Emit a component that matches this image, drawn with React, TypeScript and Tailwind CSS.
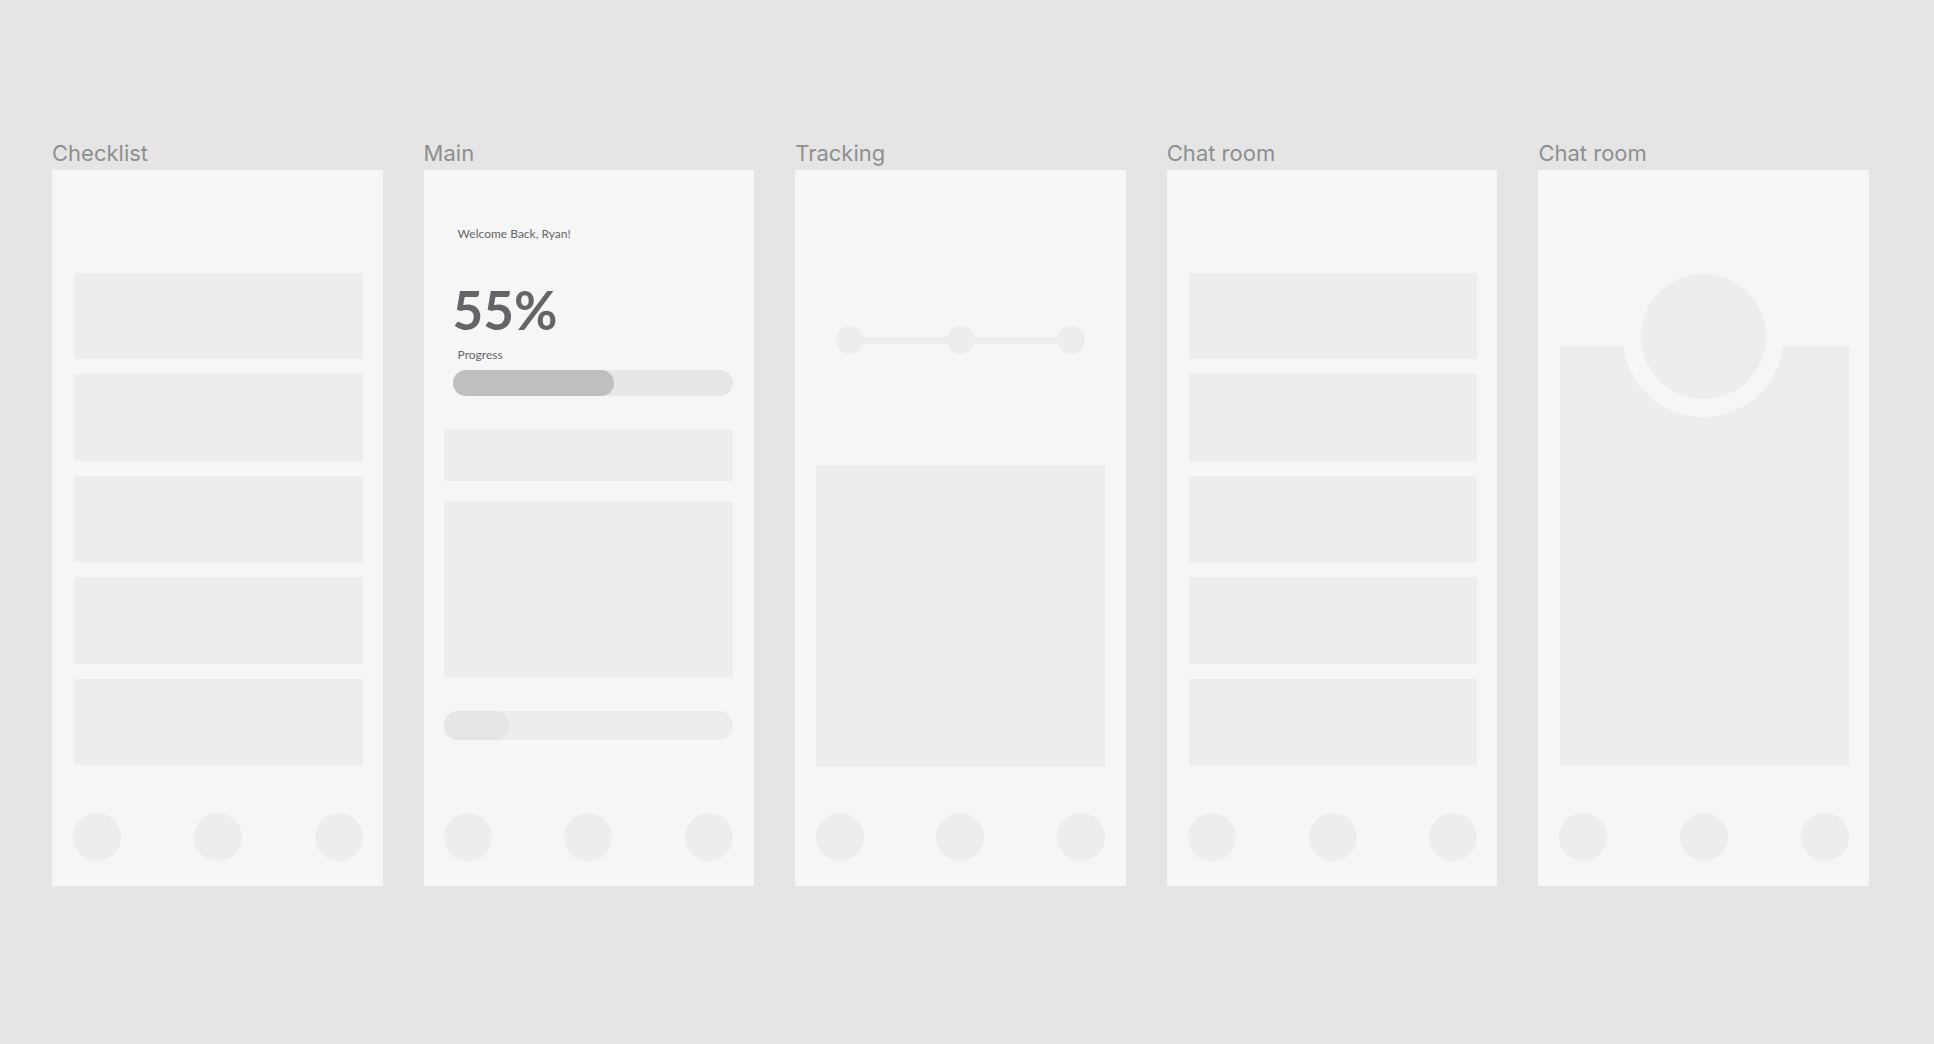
import type { ReactNode } from "react";

function Block({ className = "" }: { className?: string }) {
  return <div className={`bg-[#ededed] ${className}`} />;
}

function Nav({ className }: { className: string }) {
  return (
    <nav className={`mt-auto flex justify-between pb-[25px] ${className}`}>
      {["First tab", "Second tab", "Third tab"].map((label) => (
        <button key={label} type="button" aria-label={label} className="size-12 rounded-full bg-[#ededed]" />
      ))}
    </nav>
  );
}

function Screen({ title, navClass, children }: { title: string; navClass: string; children: ReactNode }) {
  return (
    <section className="flex min-w-0 flex-col">
      <h2 className="font-['Inter',sans-serif] text-[22px] leading-[34px] whitespace-nowrap text-[#8f8f8f]">{title}</h2>
      <div className="flex min-h-[716px] flex-1 flex-col bg-[#f6f6f6]">
        {children}
        <Nav className={navClass} />
      </div>
    </section>
  );
}

function CardList() {
  return (
    <div className="mt-[103px] grid h-[492px] auto-rows-fr gap-[15px] pr-5 pl-[22px]">
      {[1, 2, 3, 4, 5].map((n) => (
        <Block key={n} />
      ))}
    </div>
  );
}

function ProgressBar({
  label,
  value,
  fill,
  trackClass,
  fillClass,
}: {
  label: string;
  value: number;
  fill: number;
  trackClass: string;
  fillClass: string;
}) {
  return (
    <div
      role="progressbar"
      aria-label={label}
      aria-valuemin={0}
      aria-valuemax={100}
      aria-valuenow={value}
      className={`rounded-full ${trackClass}`}
    >
      <div className={`h-full rounded-full ${fillClass}`} style={{ width: `${fill}%` }} />
    </div>
  );
}

function Step() {
  return <li className="size-7 rounded-full bg-[#ededed]" />;
}

export default function App() {
  return (
    <main className="min-h-screen bg-[#e5e5e5] pt-[136px] pr-[65px] pb-10 pl-[52px]">
      <div className="grid grid-cols-5 gap-[41px]">
        <Screen title="Checklist" navClass="pl-[21px] pr-5">
          <CardList />
        </Screen>

        <Screen title="Main" navClass="pl-5 pr-[21px]">
          <div className="flex flex-col pt-[54px] pr-[21px] pl-5 font-['Lato',sans-serif] text-[#656469]">
            <p className="pl-[14px] text-xs leading-5">Welcome Back, Ryan!</p>
            <p className="mt-[39px] pl-[9px] text-[53px] leading-none font-bold">55%</p>
            <p className="mt-[9px] pl-[14px] text-xs leading-5">Progress</p>
            <div className="mt-[5px] pl-[9px]">
              <ProgressBar
                label="Progress"
                value={55}
                fill={57.5}
                trackClass="h-[26px] bg-[#e7e7e7]"
                fillClass="bg-[#bfbfbf]"
              />
            </div>
            <Block className="mt-[34px] h-[51px]" />
            <Block className="mt-[21px] mb-[34px] h-[175px]" />
            <ProgressBar
              label="Secondary progress"
              value={22}
              fill={22.5}
              trackClass="h-[29px] bg-[#ededed]"
              fillClass="bg-[#e5e5e5]"
            />
          </div>
        </Screen>

        <Screen title="Tracking" navClass="px-[21px]">
          <ol className="mt-[156px] flex items-center px-[41px]">
            <Step />
            <li aria-hidden="true" className="-mx-px h-[7px] flex-1 bg-[#ededed]" />
            <Step />
            <li aria-hidden="true" className="-mx-px h-[7px] flex-1 bg-[#ededed]" />
            <Step />
          </ol>
          <Block className="mx-[21px] mt-[111px] h-[302px]" />
        </Screen>

        <Screen title="Chat room" navClass="pl-[21px] pr-5">
          <CardList />
        </Screen>

        <Screen title="Chat room" navClass="pl-[21px] pr-5">
          <div className="mt-[86px] flex justify-center">
            <div className="z-10 size-[161px] rounded-full bg-[#f6f6f6] p-[18px]">
              <div className="size-full rounded-full bg-[#ededed]" />
            </div>
          </div>
          <Block className="-mt-[71px] mr-5 ml-[22px] h-[419px]" />
        </Screen>
      </div>
    </main>
  );
}
